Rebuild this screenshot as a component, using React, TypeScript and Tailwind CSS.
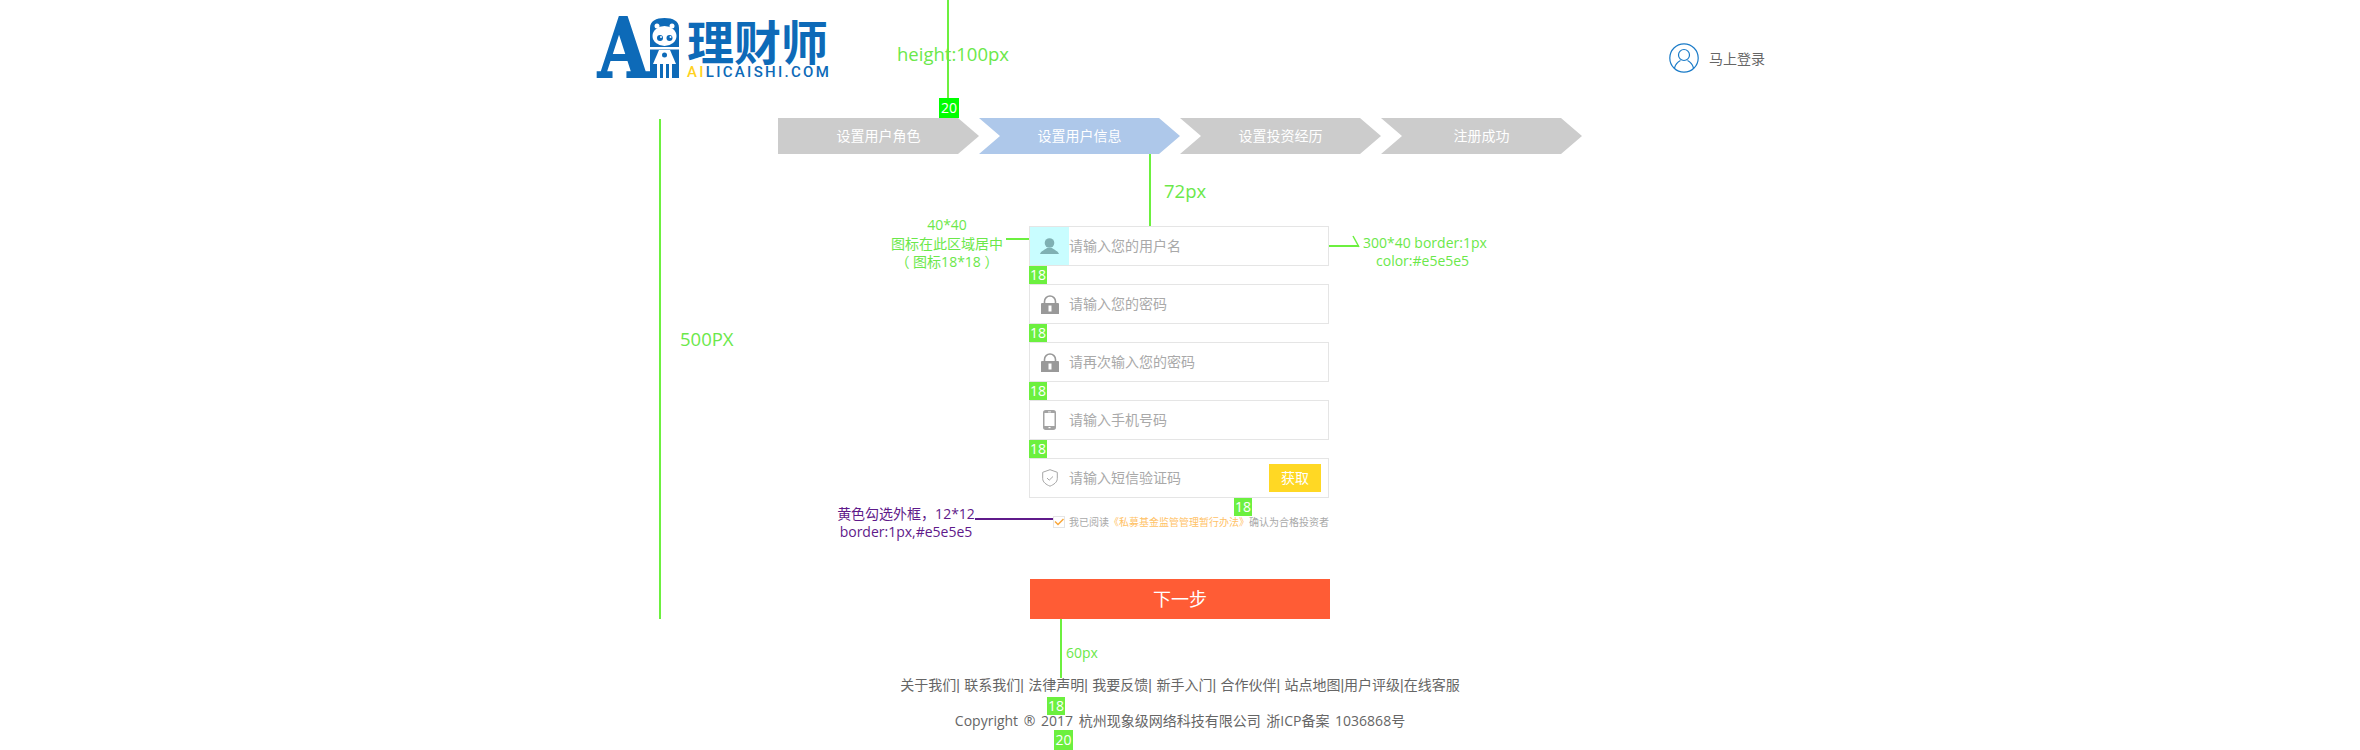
const green = 'bg-[#6cf03f]'

function Step({ label, active, first }: { label: string; active?: boolean; first?: boolean }) {
  const points = first ? '0,0 180,0 201,18 180,36 0,36' : '0,0 180,0 201,18 180,36 0,36 21,18'
  return (
    <div className="relative flex h-9 w-[201px] items-center justify-center text-sm text-white">
      <svg className="absolute inset-0" width="201" height="36" viewBox="0 0 201 36">
        <polygon points={points} fill={active ? '#aec8ea' : '#cccccc'} />
      </svg>
      <span className="relative">{label}</span>
    </div>
  )
}

function UserIcon() {
  return (
    <svg width="19" height="16" viewBox="0 0 19 16" fill="#7fb0b3">
      <circle cx="9.500" cy="5" r="4.800" />
      <path d="M0 16c1-3 4.500-4 7-6h5c2.500 2 6 3 7 6z" />
    </svg>
  )
}

function LockIcon() {
  return (
    <svg width="18" height="19" viewBox="0 0 18 19">
      <path d="M3.500 9V6.500a5.500 5.500 0 0 1 11 0V9" fill="none" stroke="#999999" strokeWidth="1.600" />
      <path d="M0.500 8h17l0.500 0.500V19H0V8.500z" fill="#999999" />
      <rect x="7.500" y="10.500" width="3" height="6" fill="#ffffff" />
    </svg>
  )
}

function PhoneIcon() {
  return (
    <svg width="13" height="20" viewBox="0 0 13 20">
      <rect x="0.750" y="0.750" width="11.500" height="18.500" rx="2" fill="none" stroke="#a3a3a3" strokeWidth="1.500" />
      <rect x="1" y="1" width="11" height="2" fill="#a3a3a3" />
      <rect x="1" y="16" width="11" height="3" fill="#a3a3a3" />
      <rect x="5" y="1.500" width="3" height="0.800" fill="#ffffff" />
      <rect x="5.500" y="17" width="2" height="1.200" fill="#ffffff" />
    </svg>
  )
}

function ShieldIcon() {
  return (
    <svg width="16" height="18" viewBox="0 0 16 18" fill="none" stroke="#a6a6a6" strokeWidth="1">
      <path d="M8 0.700l7.300 2.600v6.200c0 3.800-3.500 6-7.300 7.700-3.800-1.700-7.300-3.900-7.300-7.700V3.300z" />
      <path d="M5 9l2.200 2.200L11 7.500" />
    </svg>
  )
}

function Field({ icon, text, highlight, children }: { icon: React.ReactNode; text: string; highlight?: boolean; children?: React.ReactNode }) {
  return (
    <div className="flex h-10 w-[300px] items-center border border-[#e5e5e5] text-sm text-[#a9a9a9]">
      <div className={`flex h-[38px] w-[39px] items-center justify-center ${highlight ? 'bg-[#c9fdff]' : ''}`}>{icon}</div>
      <span className="flex-1">{text}</span>
      {children}
    </div>
  )
}

function Logo() {
  return (
    <div className="flex h-[60px] items-start font-['Noto_Sans_CJK_SC',sans-serif]">
      <div className="h-[60px] w-[53px] origin-left translate-x-px scale-x-[0.8] font-['DejaVu_Serif',serif] text-[82px] leading-[60px] font-bold text-[#0d6ab8] [-webkit-text-stroke:2px_#0d6ab8]">A</div>
      <svg width="29" height="60" viewBox="0 0 29 60" className="shrink-0">
        <path d="M0 60V10C0 3 6 0 14.500 0S29 3 29 10v50z" fill="#0d6ab8" />
        <ellipse cx="14.500" cy="18" rx="12" ry="10" fill="#ffffff" />
        <circle cx="7" cy="8" r="2.500" fill="#ffffff" />
        <circle cx="22" cy="8" r="2.500" fill="#ffffff" />
        <circle cx="10" cy="20" r="3" fill="#0d6ab8" />
        <circle cx="19.500" cy="20" r="3" fill="#0d6ab8" />
        <circle cx="11" cy="19" r="1" fill="#ffffff" />
        <circle cx="20.500" cy="19" r="1" fill="#ffffff" />
        <rect x="0" y="29" width="29" height="2.500" fill="#ffffff" />
        <path d="M9 32h11l6 14H3z" fill="#ffffff" />
        <circle cx="14.500" cy="37" r="2.500" fill="#0d6ab8" />
        <rect x="7" y="46" width="3" height="14" fill="#ffffff" />
        <rect x="13" y="46" width="3" height="14" fill="#ffffff" />
        <rect x="19" y="46" width="3" height="14" fill="#ffffff" />
      </svg>
      <div className="ml-2 flex w-[142px] flex-col">
        <div className="h-[44px] text-[47px] leading-[44px] font-bold text-[#0d6ab8]">理财师</div>
        <div className="mt-[5px] flex justify-between font-['Roboto',sans-serif] text-[15px] leading-[11px] font-medium text-[#0d6ab8]">
          {'AILICAISHI.COM'.split('').map((c, i) => (
            <span key={i} className={i < 2 ? 'text-[#ffd21f]' : ''}>{c}</span>
          ))}
        </div>
      </div>
    </div>
  )
}

// design notes drawn over the page
function Notes() {
  return (
    <div className="text-sm text-[#6be84a]">
      <div className={`absolute left-[947px] top-0 h-[98px] w-0.5 ${green}`} />
      <div className="absolute left-[939px] top-[98px] h-5 w-5 bg-[#00ff00] text-center text-sm leading-5 text-white">20</div>
      <div className="absolute left-[897px] top-[42px] text-[18.500px] leading-6">height:100px</div>

      <div className={`absolute left-[659px] top-[119px] h-[500px] w-0.5 ${green}`} />
      <div className="absolute left-[680px] top-[327px] text-[18.500px] leading-6">500PX</div>

      <div className={`absolute left-[1149px] top-[154px] h-[72px] w-0.5 ${green}`} />
      <div className="absolute left-[1164px] top-[179px] text-[18.500px] leading-6">72px</div>

      <div className="absolute left-[880px] top-[216px] w-[134px] text-center leading-[18.500px]">
        <div>40*40</div>
        <div>图标在此区域居中</div>
        <div>（ 图标18*18 ）</div>
      </div>
      <div className={`absolute left-[1006px] top-[238px] h-0.5 w-[23px] ${green}`} />

      <div className={`absolute left-[1329px] top-[245px] h-0.5 w-[30px] ${green}`} />
      <svg className="absolute left-[1350px] top-[234px]" width="12" height="14" viewBox="0 0 12 14">
        <path d="M3 2l6 11" stroke="#6cf03f" strokeWidth="1.500" fill="none" />
      </svg>
      <div className="absolute left-[1363px] top-[234px] leading-[18px]">300*40 border:1px</div>
      <div className="absolute left-[1376px] top-[252px] leading-[18px]">color:#e5e5e5</div>

      {[266, 324, 382, 440].map((top) => (
        <div key={top} className={`absolute left-[1029px] h-[18px] w-[18px] text-center leading-[18px] text-white ${green}`} style={{ top }}>18</div>
      ))}
      <div className={`absolute left-[1234px] top-[498px] h-[18px] w-[18px] text-center leading-[18px] text-white ${green}`}>18</div>

      <div className="absolute left-[826px] top-[505px] w-[160px] text-center leading-[18px] text-[#5f1a8a]">
        <div>黄色勾选外框，12*12</div>
        <div>border:1px,#e5e5e5</div>
      </div>
      <div className="absolute left-[975px] top-[518px] h-0.5 w-[78px] bg-[#5f1a8a]" />

      <div className={`absolute left-[1060px] top-[619px] h-[59px] w-0.5 ${green}`} />
      <div className="absolute left-[1066px] top-[643px] leading-5">60px</div>
      <div className={`absolute left-[1047px] top-[697px] h-[18px] w-[18px] text-center leading-[18px] text-white ${green}`}>18</div>
      <div className={`absolute left-[1054px] top-[730px] h-5 w-[19px] text-center leading-5 text-white ${green}`}>20</div>
    </div>
  )
}

export default function App() {
  return (
    <div className="relative h-[750px] w-[2360px] overflow-hidden bg-white font-['Open_Sans','Noto_Sans_CJK_SC',sans-serif]">
      <div className="mx-auto w-[1200px]">
        {/* Header */}
        <div className="flex h-[100px] items-start justify-between pl-[17px] pr-[15px] pt-[18px]">
          <Logo />
          <div className="mt-[25px] flex items-center gap-2.5 text-sm text-[#666666]">
            <svg width="30" height="30" viewBox="0 0 30 30" fill="none" stroke="#1a7bc8" strokeWidth="1.200">
              <circle cx="15" cy="15" r="14.200" />
              <circle cx="15" cy="12" r="5.500" />
              <path d="M5.500 25c1-4 4-6.500 6-7.500M24.500 25c-1-4-4-6.500-6-7.500" />
            </svg>
            <span className="pt-0.5">马上登录</span>
          </div>
        </div>

        {/* Steps */}
        <div className="mt-[18px] flex justify-center">
          <Step label="设置用户角色" first />
          <Step label="设置用户信息" active />
          <Step label="设置投资经历" />
          <Step label="注册成功" />
        </div>

        {/* Form */}
        <div className="ml-[449px] mt-[72px] flex w-[300px] flex-col gap-[18px]">
          <Field icon={<UserIcon />} text="请输入您的用户名" highlight />
          <Field icon={<LockIcon />} text="请输入您的密码" />
          <Field icon={<LockIcon />} text="请再次输入您的密码" />
          <Field icon={<PhoneIcon />} text="请输入手机号码" />
          <Field icon={<ShieldIcon />} text="请输入短信验证码">
            <button className="mr-[7px] h-7 w-[52px] bg-[#ffd824] text-sm text-white">获取</button>
          </Field>
        </div>

        <div className="ml-[473px] mt-[18px] flex h-3 items-center text-[10px] text-[#a9a9a9]">
          <div className="flex h-3 w-3 shrink-0 items-center justify-center border border-[#e5e5e5]">
            <svg width="10" height="8" viewBox="0 0 10 8" fill="none" stroke="#f9a73a" strokeWidth="1.500">
              <path d="M1 3.500L4 6.500 9.500 1" />
            </svg>
          </div>
          <span className="ml-1 whitespace-nowrap">
            我已阅读<span className="text-[#ffc266]">《私募基金监管管理暂行办法》</span>确认为合格投资者
          </span>
        </div>

        <button className="ml-[450px] mt-[51px] block h-10 w-[300px] bg-[#ff5c35] text-lg text-white">下一步</button>

        {/* Footer */}
        <div className="mt-[57px] text-center text-sm leading-[18px] text-[#666666]">
          <div className="font-['Liberation_Sans','Noto_Sans_CJK_SC',sans-serif] [word-spacing:0.5px]">关于我们| 联系我们| 法律声明| 我要反馈| 新手入门| 合作伙伴| 站点地图|用户评级|在线客服</div>
          <div className="mt-[18px] [word-spacing:2px]">Copyright ® 2017 杭州现象级网络科技有限公司 浙ICP备案 1036868号</div>
        </div>
      </div>

      <Notes />
    </div>
  )
}
